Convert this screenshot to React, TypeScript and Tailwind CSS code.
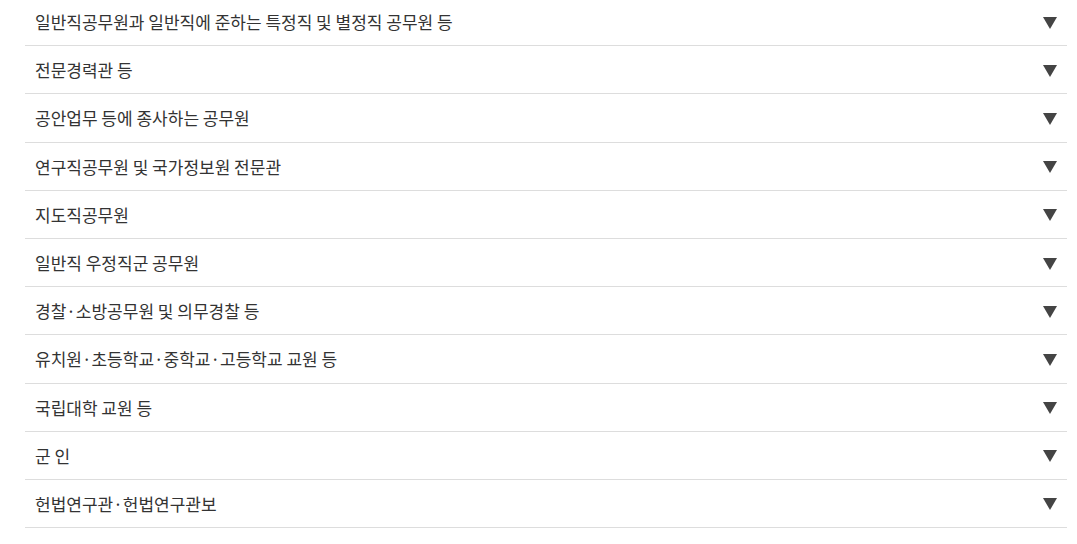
const items = [
  "일반직공무원과 일반직에 준하는 특정직 및 별정직 공무원 등",
  "전문경력관 등",
  "공안업무 등에 종사하는 공무원",
  "연구직공무원 및 국가정보원 전문관",
  "지도직공무원",
  "일반직 우정직군 공무원",
  "경찰·소방공무원 및 의무경찰 등",
  "유치원·초등학교·중학교·고등학교 교원 등",
  "국립대학 교원 등",
  "군 인",
  "헌법연구관·헌법연구관보",
];

function Arrow() {
  return (
    <svg width="14" height="12" viewBox="0 0 14 12" className="shrink-0 mt-[2px]">
      <polygon points="0,0 14,0 7,12" fill="#444" />
    </svg>
  );
}

export default function App() {
  return (
    <div
      className="bg-white w-[1077px] h-[544px] overflow-hidden"
      style={{ fontFamily: '"Noto Sans CJK KR", "Noto Sans", sans-serif' }}
    >
      <ul className="ml-[25px] mr-[10px] -mt-[2px]">
        {items.map((label) => (
          <li
            key={label}
            className="flex items-center justify-between h-[48.2px] border-b border-[#dddddd] pl-[10px] pr-[10px] cursor-pointer"
          >
            <span className="text-[17px] leading-none text-[#333333]">{label}</span>
            <Arrow />
          </li>
        ))}
      </ul>
    </div>
  );
}
